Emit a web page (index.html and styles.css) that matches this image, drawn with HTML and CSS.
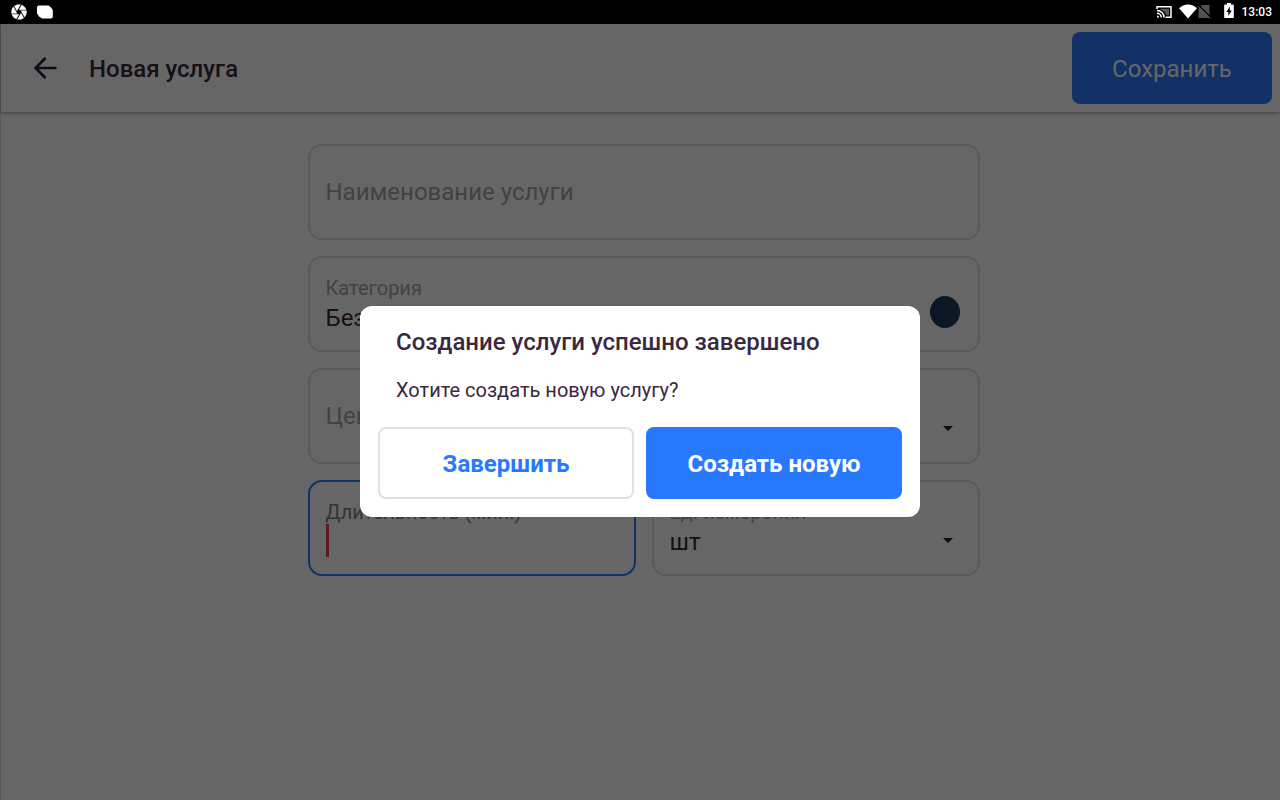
FILE: index.html
```html
<!DOCTYPE html>
<html lang="ru">
<head>
  <meta charset="UTF-8" />
  <meta name="viewport" content="width=device-width, initial-scale=1.0"/>
  <title>Новая услуга</title>
  <link rel="stylesheet" href="styles.css">
</head>
<body>
  <div class="status-bar">
    <div class="status-group status-left">
      <svg width="16" height="16" viewBox="1.500 1.500 21 21">
        <path fill="#fff" stroke="#fff" stroke-width=".2" d="M9.400 10.500l4.770-8.260C13.470 2.090 12.750 2 12 2c-2.400 0-4.600.85-6.320 2.250l3.660 6.350.06-.1zM21.540 9c-.92-2.920-3.150-5.260-6-6.340L11.880 9h9.660zm.26 1h-7.490l.29.5 4.760 8.250C21 16.970 22 14.610 22 12c0-.69-.07-1.350-.2-2zM8.540 12l-3.900-6.750C3.010 7.030 2 9.390 2 12c0 .69.07 1.350.2 2h7.490l-1.150-2zm-6.080 3c.92 2.920 3.150 5.260 6 6.340L12.120 15H2.460zm11.270 0l-3.900 6.760c.7.15 1.420.24 2.170.24 2.400 0 4.600-.85 6.320-2.250l-3.660-6.350-.93 1.600z"/>
      </svg>
      <svg width="16" height="16" viewBox="0 0 16 16">
        <path d="M2 1.500h9.500L14 3.500l1.800 2.500v6.500a2 2 0 0 1-2 2H5L2 12.500 0 9.500v-6a2 2 0 0 1 2-2z" fill="#fff"/>
      </svg>
    </div>
    <div class="status-group status-right">
      <svg width="16" height="16" viewBox="0 0 16 16">
        <g fill="none" stroke="#fff" stroke-width="1.5">
          <path d="M1 5V2.800h14v10.400H9.500"/>
          <path d="M1 6.500a7 7 0 0 1 7 7M1 9.300a4.200 4.200 0 0 1 4.200 4.200"/>
        </g>
        <path d="M4.500 4.800h8.500v6.500h-2.800A9.500 9.500 0 0 0 4.500 5.600z" fill="#555"/>
        <path d="M1 11.500a2 2 0 0 1 2 2H1z" fill="#fff"/>
      </svg>
      <svg class="icon-wifi" width="18" height="16" viewBox="0 0 18 16">
        <path d="M0 4.200C5-.9 13-.9 18 4.200L9 14.500z" fill="#fff"/>
      </svg>
      <svg class="icon-sim" width="14" height="16" viewBox="0 0 14 16">
        <path d="M5 1h7.500v13H1.500V5z" fill="#505050"/>
        <path d="M1.500 1.300 14 13.800" stroke="#000" stroke-width="1.400"/>
        <path d="M.8 2 13 14.500" stroke="#666" stroke-width="1"/>
      </svg>
      <svg class="icon-battery" width="10" height="16" viewBox="0 0 10 16">
        <path d="M3 0h4v1.500h2a.8.8 0 0 1 .8.8v12a.8.8 0 0 1-.8.8H1a.8.8 0 0 1-.8-.8v-12a.8.8 0 0 1 .8-.8h2z" fill="#fff"/>
        <path d="M5.800 3.500 2.300 9h2v4l3.500-5.500h-2z" fill="#000"/>
      </svg>
      <span class="clock">13:03</span>
    </div>
  </div>

  <div class="screen">
    <header class="toolbar">
      <button class="back" type="button" aria-label="Назад">
        <svg width="24" height="24" viewBox="0 0 24 24" fill="none" stroke="currentColor" stroke-width="2.600">
          <path d="M23.500 11H3M12.500 1 2.600 11l9.900 10"/>
        </svg>
      </button>
      <h1>Новая услуга</h1>
      <button class="save" type="submit" form="serviceForm">Сохранить</button>
    </header>

    <form class="form" id="serviceForm">
      <div class="field">
        <input class="only" type="text" placeholder="Наименование услуги" aria-label="Наименование услуги">
      </div>

      <div class="field">
        <label for="category">Категория</label>
        <select id="category"><option>Без категории</option></select>
        <span class="color-dot"></span>
      </div>

      <div class="row">
        <div class="field">
          <input class="only" type="text" placeholder="Цена" aria-label="Цена">
        </div>
        <div class="field">
          <select class="only" aria-label="НДС"><option></option></select>
          <span class="arrow"></span>
        </div>
      </div>

      <div class="row">
        <div class="field active">
          <label for="duration">Длительность (мин.)</label>
          <input id="duration" type="text">
          <span class="caret"></span>
        </div>
        <div class="field">
          <label for="unit">Ед. измерения</label>
          <select id="unit"><option>шт</option></select>
          <span class="arrow"></span>
        </div>
      </div>
    </form>
  </div>

  <div class="overlay">
    <div class="dialog" role="dialog" aria-modal="true" aria-labelledby="dialogTitle">
      <h2 id="dialogTitle">Создание услуги успешно завершено</h2>
      <p>Хотите создать новую услугу?</p>
      <div class="dialog-buttons">
        <button class="btn btn-finish" type="button">Завершить</button>
        <button class="btn btn-create" type="button">Создать новую</button>
      </div>
    </div>
  </div>
</body>
</html>
```
FILE: styles.css
```css
:root {
  --text: #3a2840;
  --muted: #a8a4aa;
  --line: #e0e0e0;
  --blue: #2979ff;
}
* { box-sizing: border-box; }
body {
  margin: 0;
  min-height: 100vh;
  display: flex;
  flex-direction: column;
  font-family: Roboto, "Liberation Sans", sans-serif;
  color: var(--text);
  background: #fff;
}
button, input, select { font-family: inherit; }
button { cursor: pointer; }

/* Status bar */
.status-bar {
  height: 24px;
  padding: 0 8px 0 11px;
  display: flex;
  justify-content: space-between;
  background: #000;
  color: #fff;
}
.status-group { display: flex; align-items: center; }
.status-left { gap: 10px; }
.icon-wifi { margin-left: 7px; }
.icon-battery { margin: 0 8px 2px 13px; }
.clock { font-size: 12px; font-weight: 500; }

.screen {
  flex: 1;
  border-left: 1px solid var(--line);
}

/* Toolbar */
.toolbar {
  height: 88px;
  padding: 2px 8px 0 32px;
  display: flex;
  align-items: center;
  box-shadow: 0 1px 4px rgba(0,0,0,0.4);
}
.back {
  display: flex;
  padding: 0;
  border: none;
  background: none;
  color: #2b1730;
}
.toolbar h1 {
  flex: 1;
  margin: 0 0 0 32px;
  font-size: 24px;
  font-weight: 500;
  line-height: 36px;
}
.save {
  width: 200px;
  height: 72px;
  margin-bottom: 2px;
  padding: 2px 0 0;
  border: none;
  border-radius: 8px;
  background: var(--blue);
  color: #fff;
  font-size: 24px;
}

/* Form */
.form {
  max-width: 704px;
  margin: 0 auto;
  padding: 32px 13px 32px 19px;
  display: flex;
  flex-direction: column;
  gap: 16px;
}
.row { display: flex; gap: 16px; }
.row .field { flex: 1; }
.field {
  position: relative;
  min-width: 0;
  height: 96px;
  padding: 18px 16px 14px;
  border: 2px solid var(--line);
  border-radius: 14px;
}
.field label {
  display: block;
  font-size: 20px;
  line-height: 24px;
  color: var(--muted);
}
.field input,
.field select {
  display: block;
  width: 100%;
  height: 36px;
  padding: 0;
  border: none;
  outline: none;
  appearance: none;
  background: none;
  color: var(--text);
  font-size: 24px;
}
.field .only { height: 56px; }
.field input::placeholder { color: var(--muted); opacity: 1; }
.field.active { border-color: var(--blue); }
.field.active label { color: #858087; }
.caret {
  position: absolute;
  top: 42px;
  left: 16px;
  width: 3px;
  height: 33px;
  background: #e0444a;
}
.color-dot {
  position: absolute;
  top: 38px;
  right: 18px;
  width: 30px;
  height: 32px;
  border-radius: 50%;
  background: #203a5c;
}
.arrow {
  position: absolute;
  top: 56px;
  right: 25px;
  border: 5px solid transparent;
  border-top-color: #2b1730;
  border-bottom: 0;
}

/* Dialog */
.overlay {
  position: fixed;
  inset: 24px 0 0;
  display: flex;
  align-items: center;
  justify-content: center;
  padding-bottom: 1px;
  background: rgba(0,0,0,0.6);
}
.dialog {
  width: 560px;
  max-width: 100%;
  padding: 18px;
  border-radius: 12px;
  background: #fff;
}
.dialog h2 {
  margin: 0 18px 16px;
  font-size: 24px;
  font-weight: 500;
  line-height: 36px;
}
.dialog p {
  margin: 0 18px 23px;
  font-size: 20px;
  line-height: 28px;
}
.dialog-buttons { display: flex; gap: 12px; }
.btn {
  flex: 1;
  height: 72px;
  padding: 2px 0 0;
  border: 2px solid var(--blue);
  border-radius: 8px;
  font-size: 24px;
  font-weight: 700;
}
.btn-finish { border-color: var(--line); background: #fff; color: var(--blue); }
.btn-create { background: var(--blue); color: #fff; }
```
